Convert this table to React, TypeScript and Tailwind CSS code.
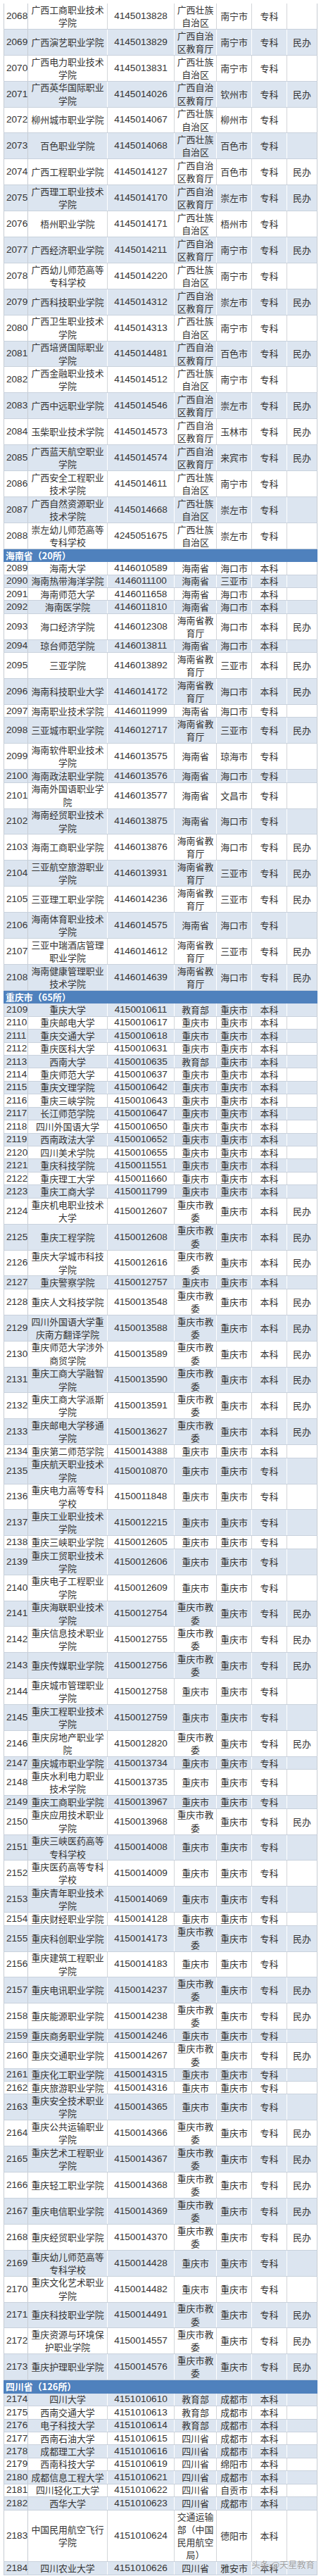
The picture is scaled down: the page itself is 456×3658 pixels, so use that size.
import React from 'react';

type Row = { num: string; name: string; code: string; dept: string; city: string; level: string; note: string };

type Section = { title?: string; blueParity: number; data: string };

const GX_Z = '广西壮族自治区';
const GX_J = '广西自治区教育厅';

const SECTIONS: Section[] = [
  {
    blueParity: 1,
    data: `
2068|广西工商职业技术学院|4145013828|${GX_Z}|南宁市|专科|
2069|广西演艺职业学院|4145013829|${GX_J}|南宁市|专科|民办
2070|广西电力职业技术学院|4145013831|${GX_Z}|南宁市|专科|
2071|广西英华国际职业学院|4145014026|${GX_J}|钦州市|专科|民办
2072|柳州城市职业学院|4145014067|${GX_Z}|柳州市|专科|
2073|百色职业学院|4145014068|${GX_Z}|百色市|专科|
2074|广西工程职业学院|4145014127|${GX_J}|百色市|专科|民办
2075|广西理工职业技术学院|4145014170|${GX_J}|崇左市|专科|民办
2076|梧州职业学院|4145014171|${GX_Z}|梧州市|专科|
2077|广西经济职业学院|4145014211|${GX_J}|南宁市|专科|民办
2078|广西幼儿师范高等专科学校|4145014220|${GX_Z}|南宁市|专科|
2079|广西科技职业学院|4145014312|${GX_J}|崇左市|专科|民办
2080|广西卫生职业技术学院|4145014313|${GX_Z}|南宁市|专科|
2081|广西培贤国际职业学院|4145014481|${GX_J}|百色市|专科|民办
2082|广西金融职业技术学院|4145014512|${GX_Z}|南宁市|专科|
2083|广西中远职业学院|4145014546|${GX_J}|崇左市|专科|民办
2084|玉柴职业技术学院|4145014573|${GX_J}|玉林市|专科|民办
2085|广西蓝天航空职业学院|4145014574|${GX_J}|来宾市|专科|民办
2086|广西安全工程职业技术学院|4145014611|${GX_Z}|南宁市|专科|
2087|广西自然资源职业技术学院|4145014668|${GX_Z}|崇左市|专科|
2088|崇左幼儿师范高等专科学校|4245051675|${GX_Z}|崇左市|专科|`,
  },
  {
    title: '海南省（20所）',
    blueParity: 0,
    data: `
2089|海南大学|4146010589|海南省|海口市|本科|
2090|海南热带海洋学院|4146011100|海南省|三亚市|本科|
2091|海南师范大学|4146011658|海南省|海口市|本科|
2092|海南医学院|4146011810|海南省|海口市|本科|
2093|海口经济学院|4146012308|海南省教育厅|海口市|本科|民办
2094|琼台师范学院|4146013811|海南省|海口市|本科|
2095|三亚学院|4146013892|海南省教育厅|三亚市|本科|民办
2096|海南科技职业大学|4146014172|海南省教育厅|海口市|本科|民办
2097|海南职业技术学院|4146011999|海南省|海口市|专科|
2098|三亚城市职业学院|4146012717|海南省教育厅|三亚市|专科|民办
2099|海南软件职业技术学院|4146013575|海南省|琼海市|专科|
2100|海南政法职业学院|4146013576|海南省|海口市|专科|
2101|海南外国语职业学院|4146013577|海南省|文昌市|专科|
2102|海南经贸职业技术学院|4146013875|海南省|海口市|专科|
2103|海南工商职业学院|4146013876|海南省教育厅|海口市|专科|民办
2104|三亚航空旅游职业学院|4146013931|海南省教育厅|三亚市|专科|民办
2105|三亚理工职业学院|4146014236|海南省教育厅|三亚市|专科|民办
2106|海南体育职业技术学院|4146014575|海南省|海口市|专科|
2107|三亚中瑞酒店管理职业学院|4146014612|海南省教育厅|三亚市|专科|民办
2108|海南健康管理职业技术学院|4146014639|海南省教育厅|海口市|专科|民办`,
  },
  {
    title: '重庆市（65所）',
    blueParity: 1,
    data: `
2109|重庆大学|4150010611|教育部|重庆市|本科|
2110|重庆邮电大学|4150010617|重庆市|重庆市|本科|
2111|重庆交通大学|4150010618|重庆市|重庆市|本科|
2112|重庆医科大学|4150010631|重庆市|重庆市|本科|
2113|西南大学|4150010635|教育部|重庆市|本科|
2114|重庆师范大学|4150010637|重庆市|重庆市|本科|
2115|重庆文理学院|4150010642|重庆市|重庆市|本科|
2116|重庆三峡学院|4150010643|重庆市|重庆市|本科|
2117|长江师范学院|4150010647|重庆市|重庆市|本科|
2118|四川外国语大学|4150010650|重庆市|重庆市|本科|
2119|西南政法大学|4150010652|重庆市|重庆市|本科|
2120|四川美术学院|4150010655|重庆市|重庆市|本科|
2121|重庆科技学院|4150011551|重庆市|重庆市|本科|
2122|重庆理工大学|4150011660|重庆市|重庆市|本科|
2123|重庆工商大学|4150011799|重庆市|重庆市|本科|
2124|重庆机电职业技术大学|4150012607|重庆市教委|重庆市|本科|民办
2125|重庆工程学院|4150012608|重庆市教委|重庆市|本科|民办
2126|重庆大学城市科技学院|4150012616|重庆市教委|重庆市|本科|民办
2127|重庆警察学院|4150012757|重庆市|重庆市|本科|
2128|重庆人文科技学院|4150013548|重庆市教委|重庆市|本科|民办
2129|四川外国语大学重庆南方翻译学院|4150013588|重庆市教委|重庆市|本科|民办
2130|重庆师范大学涉外商贸学院|4150013589|重庆市教委|重庆市|本科|民办
2131|重庆工商大学融智学院|4150013590|重庆市教委|重庆市|本科|民办
2132|重庆工商大学派斯学院|4150013591|重庆市教委|重庆市|本科|民办
2133|重庆邮电大学移通学院|4150013627|重庆市教委|重庆市|本科|民办
2134|重庆第二师范学院|4150014388|重庆市|重庆市|本科|
2135|重庆航天职业技术学院|4150010870|重庆市|重庆市|专科|
2136|重庆电力高等专科学校|4150011848|重庆市|重庆市|专科|
2137|重庆工业职业技术学院|4150012215|重庆市|重庆市|专科|
2138|重庆三峡职业学院|4150012605|重庆市|重庆市|专科|
2139|重庆工贸职业技术学院|4150012606|重庆市|重庆市|专科|
2140|重庆电子工程职业学院|4150012609|重庆市|重庆市|专科|
2141|重庆海联职业技术学院|4150012754|重庆市教委|重庆市|专科|民办
2142|重庆信息技术职业学院|4150012755|重庆市教委|重庆市|专科|民办
2143|重庆传媒职业学院|4150012756|重庆市教委|重庆市|专科|民办
2144|重庆城市管理职业学院|4150012758|重庆市|重庆市|专科|
2145|重庆工程职业技术学院|4150012759|重庆市|重庆市|专科|
2146|重庆房地产职业学院|4150012820|重庆市教委|重庆市|专科|民办
2147|重庆城市职业学院|4150013734|重庆市|重庆市|专科|
2148|重庆水利电力职业技术学院|4150013735|重庆市|重庆市|专科|
2149|重庆工商职业学院|4150013967|重庆市|重庆市|专科|
2150|重庆应用技术职业学院|4150013968|重庆市教委|重庆市|专科|民办
2151|重庆三峡医药高等专科学校|4150014008|重庆市|重庆市|专科|
2152|重庆医药高等专科学校|4150014009|重庆市|重庆市|专科|
2153|重庆青年职业技术学院|4150014069|重庆市|重庆市|专科|
2154|重庆财经职业学院|4150014128|重庆市|重庆市|专科|
2155|重庆科创职业学院|4150014173|重庆市教委|重庆市|专科|民办
2156|重庆建筑工程职业学院|4150014183|重庆市|重庆市|专科|
2157|重庆电讯职业学院|4150014237|重庆市教委|重庆市|专科|民办
2158|重庆能源职业学院|4150014238|重庆市教委|重庆市|专科|民办
2159|重庆商务职业学院|4150014246|重庆市|重庆市|专科|
2160|重庆交通职业学院|4150014267|重庆市教委|重庆市|专科|民办
2161|重庆化工职业学院|4150014315|重庆市|重庆市|专科|
2162|重庆旅游职业学院|4150014316|重庆市|重庆市|专科|
2163|重庆安全技术职业学院|4150014365|重庆市|重庆市|专科|
2164|重庆公共运输职业学院|4150014366|重庆市教委|重庆市|专科|民办
2165|重庆艺术工程职业学院|4150014367|重庆市教委|重庆市|专科|民办
2166|重庆轻工职业学院|4150014368|重庆市教委|重庆市|专科|民办
2167|重庆电信职业学院|4150014369|重庆市教委|重庆市|专科|民办
2168|重庆经贸职业学院|4150014370|重庆市教委|重庆市|专科|民办
2169|重庆幼儿师范高等专科学校|4150014428|重庆市|重庆市|专科|
2170|重庆文化艺术职业学院|4150014482|重庆市|重庆市|专科|
2171|重庆科技职业学院|4150014491|重庆市教委|重庆市|专科|民办
2172|重庆资源与环境保护职业学院|4150014557|重庆市教委|重庆市|专科|民办
2173|重庆护理职业学院|4150014576|重庆市教委|重庆市|专科|民办`,
  },
  {
    title: '四川省（126所）',
    blueParity: 0,
    data: `
2174|四川大学|4151010610|教育部|成都市|本科|
2175|西南交通大学|4151010613|教育部|成都市|本科|
2176|电子科技大学|4151010614|教育部|成都市|本科|
2177|西南石油大学|4151010615|四川省|成都市|本科|
2178|成都理工大学|4151010616|四川省|成都市|本科|
2179|西南科技大学|4151010619|四川省|绵阳市|本科|
2180|成都信息工程大学|4151010621|四川省|成都市|本科|
2181|四川轻化工大学|4151010622|四川省|自贡市|本科|
2182|西华大学|4151010623|四川省|成都市|本科|
2183|中国民用航空飞行学院|4151010624|交通运输部（中国民用航空局）|德阳市|本科|
2184|四川农业大学|4151010626|四川省|雅安市|本科|`,
  },
];

// row height per number of text lines
const HEIGHTS: Record<number, string> = {
  1: 'h-[18.45px]',
  2: 'h-[36.9px]',
  3: 'h-[55.35px]',
  4: 'h-[73.8px]',
};

function parse(data: string): Row[] {
  return data
    .trim()
    .split('\n')
    .map((line) => {
      const [num, name, code, dept, city, level, note] = line.split('|');
      return { num, name, code, dept, city, level, note: note ?? '' };
    });
}

const cjk = "font-['Noto_Sans_CJK_SC',sans-serif] text-[12.9px]";
const digits = "font-['Liberation_Sans','Noto_Sans_CJK_SC',sans-serif] text-[13.6px]";

function TableRow({ row, blue, last }: { row: Row; blue: boolean; last?: boolean }) {
  const lines = Math.max(Math.ceil(row.name.length / 8), Math.ceil(row.dept.length / 4));
  const cell = blue
    ? 'flex items-center justify-center text-center border-r border-white'
    : 'flex items-center justify-center text-center border-r border-[#d3d6da]';

  return (
    <div
      className={`relative flex ${HEIGHTS[lines]} border-b border-[#c9d2dd] leading-[18.2px] text-[#333] ${
        blue ? 'bg-[#dce5f0]' : 'bg-white'
      }`}
    >
      <div className={`w-[35px] shrink-0 flex items-center pl-[3px] border-l border-r border-[#c7ccd3] ${digits}`}>
        {row.num}
      </div>
      <div className={`${cell} w-[113px] shrink-0 ${cjk}`}>{row.name}</div>
      <div className={`${cell} w-[95px] shrink-0 ${digits}`}>{row.code}</div>
      <div className={`${cell} w-[60px] shrink-0 ${cjk}`}>{row.dept}</div>
      <div className={`${cell} w-[50px] shrink-0 ${cjk}`}>{row.city}</div>
      <div className={`${cell} w-[50px] shrink-0 ${cjk}`}>{row.level}</div>
      <div className={`flex flex-1 items-center justify-center border-r border-[#c7ccd3] ${cjk}`}>{row.note}</div>
      {last && (
        <span className="absolute right-[4px] top-[-4px] font-['Noto_Sans_CJK_SC',sans-serif] text-[12.5px] leading-[16px] text-[#8a8a8a]/80 [text-shadow:0_0_2px_#fff]">
          头条 @天星教育
        </span>
      )}
    </div>
  );
}

function SectionHeader({ title }: { title: string }) {
  return (
    <div className="flex h-[18.45px] items-center bg-[#4f81bd] pl-[3px] font-['Noto_Sans_CJK_SC',sans-serif] text-[12.9px] font-bold leading-[18px] text-white">
      {title}
    </div>
  );
}

export default function App() {
  const total = SECTIONS.length;
  return (
    <div className="w-[456px] bg-white px-[5px] pt-[5px]">
      <div className="flex flex-col">
        {SECTIONS.map((s, si) => {
          const rows = parse(s.data);
          return (
            <React.Fragment key={si}>
              {s.title && <SectionHeader title={s.title} />}
              {rows.map((r, ri) => (
                <TableRow
                  key={r.num}
                  row={r}
                  blue={Number(r.num) % 2 === s.blueParity}
                  last={si === total - 1 && ri === rows.length - 1}
                />
              ))}
            </React.Fragment>
          );
        })}
      </div>
    </div>
  );
}
